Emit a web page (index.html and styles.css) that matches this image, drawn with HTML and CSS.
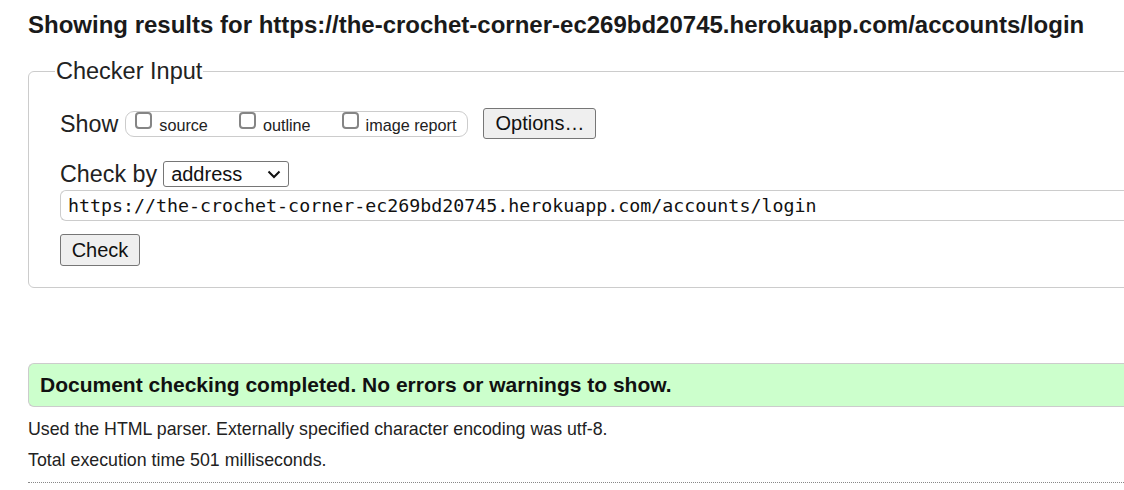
FILE: index.html
```html
<!DOCTYPE html>
<html lang="en">
<head>
<meta charset="utf-8">
<title>Showing results for https://the-crochet-corner-ec269bd20745.herokuapp.com/accounts/login - Nu Html Checker</title>
<link rel="stylesheet" href="styles.css">
</head>
<body>
<main class="page">
  <h2 class="results-title">Showing results for https://the-crochet-corner-ec269bd20745.herokuapp.com/accounts/login</h2>

  <fieldset class="checker">
    <legend class="checker-legend">Checker Input</legend>

    <div class="field-row show-row">
      <span class="field-label show-label">Show</span>
      <span class="show-opts">
        <label class="opt"><input type="checkbox" class="cb">source</label>
        <label class="opt"><input type="checkbox" class="cb">outline</label>
        <label class="opt"><input type="checkbox" class="cb">image report</label>
      </span>
      <button type="button" class="btn btn-options">Options…</button>
    </div>

    <div class="field-row by-row">
      <span class="field-label by-label">Check by</span>
      <span class="select-wrap">
        <span class="select-value">address</span>
        <svg class="chev" width="14" height="9" viewBox="0 0 14 9"><path d="M1.5 1.5 L7 7 L12.5 1.5" fill="none" stroke="#111" stroke-width="2"/></svg>
      </span>
    </div>

    <div class="url-box">https://the-crochet-corner-ec269bd20745.herokuapp.com/accounts/login</div>

    <div class="submit-row">
      <button type="button" class="btn btn-check">Check</button>
    </div>
  </fieldset>

  <div class="success">
    <p class="success-text">Document checking completed. No errors or warnings to show.</p>
  </div>

  <p class="details details-first">Used the HTML parser. Externally specified character encoding was utf-8.</p>
  <p class="details details-second">Total execution time 501 milliseconds.</p>
  <hr class="dotted-rule">
</main>
</body>
</html>
```

FILE: styles.css
```css
html {
  overflow: hidden;
  background: #fff;
}

body {
  margin: 0;
  font-family: "Liberation Sans", Arial, sans-serif;
  color: #111;
}

.page {
  width: 1180px;
  padding: 0 0 0 28px;
}

.results-title {
  margin: 0;
  padding-top: 11px;
  font-size: 24px;
  font-weight: bold;
  line-height: 28px;
  color: #1a1a1a;
}

.checker {
  margin: 18px 0 0 0;
  padding: 0 0 21px 31px;
  border: 1px solid #ccc;
  border-radius: 6px;
  min-inline-size: 0;
}

.checker-legend {
  margin-left: -5px;
  padding: 0 1px;
  font-size: 23.5px;
  color: #222;
  line-height: 28px;
}

.field-row {
  display: flex;
  align-items: center;
}

.show-row {
  margin-top: 23px;
}

.by-row {
  margin-top: 22px;
}

.field-label {
  font-size: 23.3px;
  line-height: 26px;
  color: #222;
}

.show-label {
  margin-right: 7px;
}

.by-label {
  margin-right: 6px;
}

.show-opts {
  display: flex;
  align-items: center;
  height: 24px;
  padding: 0 11px 0 9px;
  border: 1px solid #ccc;
  border-radius: 9px;
}

.opt {
  display: inline-flex;
  align-items: center;
  font-size: 16.2px;
  color: #222;
  margin-right: 31px;
  padding-top: 3px;
}

.opt:last-child {
  margin-right: 0;
}

.cb {
  appearance: none;
  -webkit-appearance: none;
  margin: 0 7px 0 0;
  width: 17px;
  height: 17px;
  box-sizing: border-box;
  border: 2px solid #858585;
  border-radius: 4px;
  background: #fff;
  position: relative;
  top: -5px;
}

.btn {
  font-family: "Liberation Sans", Arial, sans-serif;
  background: #efefef;
  border: 1px solid #767676;
  border-radius: 3px;
  color: #111;
  padding: 0;
}

.btn-options {
  margin-left: 15px;
  width: 113px;
  height: 31px;
  font-size: 20px;
}

.select-wrap {
  display: inline-flex;
  align-items: center;
  justify-content: space-between;
  width: 126px;
  height: 26px;
  border: 1px solid #767676;
  border-radius: 3px;
  padding: 0 7px 0 7px;
  box-sizing: border-box;
}

.select-value {
  font-size: 20px;
  color: #111;
}

.chev {
  margin-top: 1px;
}

.url-box {
  margin-top: 3px;
  height: 31px;
  box-sizing: border-box;
  border: 1px solid #ccc;
  border-radius: 6px 0 0 6px;
  border-right: none;
  padding: 0 0 0 7px;
  font-family: "DejaVu Sans Mono", monospace;
  font-size: 18.3px;
  line-height: 29px;
  color: #111;
}

.submit-row {
  margin-top: 13px;
}

.btn-check {
  width: 80px;
  height: 32px;
  font-size: 20px;
}

.success {
  margin-top: 75px;
  height: 44px;
  box-sizing: border-box;
  background: #ccffcc;
  border: 1px solid #ccc;
  border-right: none;
  border-radius: 6px 0 0 6px;
  display: flex;
  align-items: center;
  padding-left: 11px;
}

.success-text {
  margin: 0;
  font-size: 21px;
  font-weight: bold;
  color: #111;
}

.details {
  margin: 0;
  font-size: 17.8px;
  line-height: 21px;
  color: #222;
}

.details-first {
  margin-top: 12px;
}

.details-second {
  margin-top: 10px;
}

.dotted-rule {
  margin: 11px 0 0 0;
  border: none;
  border-top: 1px dotted #888;
  height: 0;
}
```
